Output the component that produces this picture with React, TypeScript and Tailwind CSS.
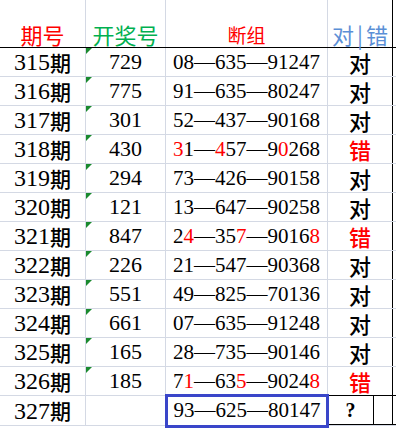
import React from "react";

type Seg = { t: string; r?: boolean };
type Row = { p: string; n: string; g: Seg[]; res: string };

const B = (t: string): Seg => ({ t });
const R = (t: string): Seg => ({ t, r: true });

const rows: Row[] = [
  { p: "315", n: "729", g: [B("08—635—91247")], res: "对" },
  { p: "316", n: "775", g: [B("91—635—80247")], res: "对" },
  { p: "317", n: "301", g: [B("52—437—90168")], res: "对" },
  { p: "318", n: "430", g: [R("3"), B("1—"), R("4"), B("57—9"), R("0"), B("268")], res: "错" },
  { p: "319", n: "294", g: [B("73—426—90158")], res: "对" },
  { p: "320", n: "121", g: [B("13—647—90258")], res: "对" },
  { p: "321", n: "847", g: [B("2"), R("4"), B("—35"), R("7"), B("—9016"), R("8")], res: "错" },
  { p: "322", n: "226", g: [B("21—547—90368")], res: "对" },
  { p: "323", n: "551", g: [B("49—825—70136")], res: "对" },
  { p: "324", n: "661", g: [B("07—635—91248")], res: "对" },
  { p: "325", n: "165", g: [B("28—735—90146")], res: "对" },
  { p: "326", n: "185", g: [B("7"), R("1"), B("—63"), R("5"), B("—9024"), R("8")], res: "错" },
];

const serif = { fontFamily: '"Liberation Serif", "Noto Sans CJK SC", serif' };
const cjk = { fontFamily: '"Noto Sans CJK SC", sans-serif' };

function Tri() {
  return (
    <div className="absolute left-0 top-0 w-0 h-0 border-t-[6px] border-t-[#1a8a2e] border-r-[6px] border-r-transparent" />
  );
}

export default function App() {
  return (
    <div className="w-[396px] h-[428px] bg-white overflow-hidden relative">
      {/* header */}
      <div className="flex h-[48px] border-b border-black">
        <div className="w-[86px] shrink-0 border-r border-[#d4d9e4] flex items-end justify-center pb-[2px]">
          <span className="text-[22px] leading-none text-[#ff0000]" style={cjk}>期号</span>
        </div>
        <div className="w-[80px] shrink-0 border-r border-[#d4d9e4] flex items-end justify-center pb-[2px]">
          <span className="text-[22px] leading-none text-[#00b050]" style={cjk}>开奖号</span>
        </div>
        <div className="w-[162px] shrink-0 border-r border-[#d4d9e4] flex items-end justify-center pb-[3px]">
          <span className="text-[19px] leading-none text-[#ff0000]" style={cjk}>断组</span>
        </div>
        <div className="w-[65px] shrink-0 border-r border-black flex items-end justify-center pb-[2px]">
          <span className="text-[22px] leading-none text-[#5b8fd6] whitespace-nowrap" style={cjk}>对<span className="mx-[3px]">|</span>错</span>
        </div>
        <div className="flex-1" />
      </div>
      {rows.map((r) => (
        <div key={r.p} className="flex h-[29px] border-b border-[#d4d9e4]">
          <div className="w-[86px] shrink-0 border-r border-[#d4d9e4] flex items-center justify-center text-black">
            <span className="text-[24px] leading-none" style={serif}>{r.p}</span>
            <span className="text-[21px] leading-none font-medium" style={cjk}>期</span>
          </div>
          <div className="relative w-[80px] shrink-0 border-r border-[#d4d9e4] flex items-center justify-center">
            <Tri />
            <span className="text-[22px] leading-none text-black" style={serif}>{r.n}</span>
          </div>
          <div className="w-[162px] shrink-0 border-r border-[#d4d9e4] flex items-center justify-center">
            <span className="text-[21px] leading-none text-black whitespace-nowrap" style={serif}>
              {r.g.map((s, i) => (
                <span key={i} className={s.r ? "text-[#ff0000]" : ""}>{s.t}</span>
              ))}
            </span>
          </div>
          <div className="w-[65px] shrink-0 border-r border-black flex items-center justify-center">
            <span className={"text-[22px] leading-none font-medium " + (r.res === "错" ? "text-[#ff0000]" : "text-black")} style={cjk}>{r.res}</span>
          </div>
          <div className="flex-1" />
        </div>
      ))}
      {/* last row */}
      <div className="flex h-[30px] border-b border-[#d4d9e4]">
        <div className="w-[86px] shrink-0 border-r border-[#d4d9e4] flex items-center justify-center text-black">
          <span className="text-[24px] leading-none" style={serif}>327</span>
          <span className="text-[21px] leading-none font-medium" style={cjk}>期</span>
        </div>
        <div className="w-[80px] shrink-0 border-r border-[#d4d9e4]" />
        <div className="relative w-[162px] shrink-0 flex items-center justify-center">
          <div className="absolute left-[-1px] right-[-1px] top-[-2px] bottom-[-3px] border-[3px] border-[#3a46c9]" />
          <span className="text-[21px] leading-none text-black whitespace-nowrap" style={serif}>93—625—80147</span>
        </div>
        <div className="w-[46px] shrink-0 border-t border-b border-r border-black flex items-center justify-center -mt-px">
          <span className="text-[20px] leading-none font-bold text-black" style={serif}>?</span>
        </div>
        <div className="w-[19px] shrink-0 border-t border-b border-r border-black -mt-px" />
        <div className="flex-1 border-t border-b border-black -mt-px" />
      </div>
    </div>
  );
}
